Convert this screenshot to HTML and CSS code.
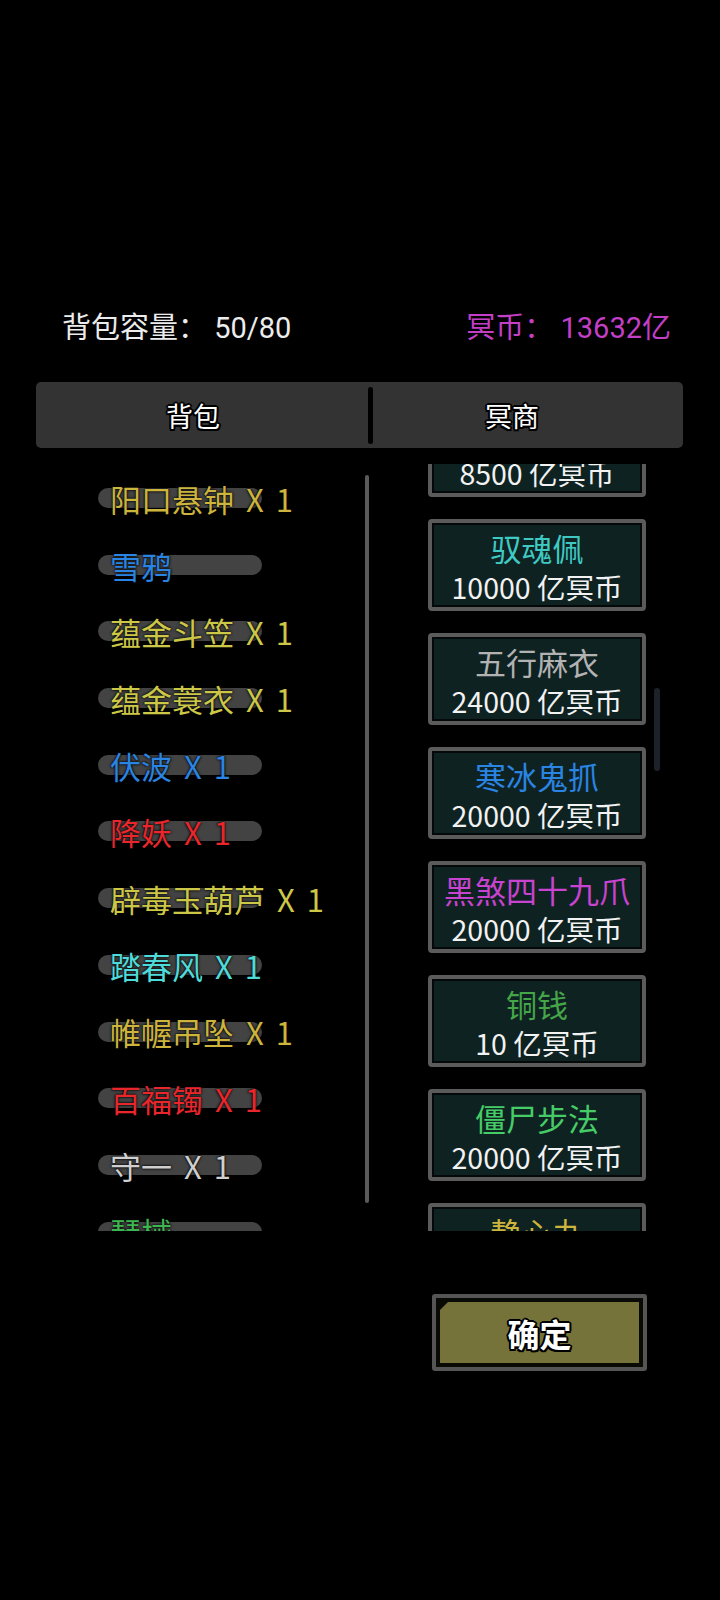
FILE: index.html
```html
<!DOCTYPE html>
<html lang="zh">
<head>
<meta charset="utf-8">
<link rel="stylesheet" href="styles.css">
</head>
<body>
<div class="screen">
  <div class="header">
    <div class="capacity">背包容量： 50/80</div>
    <div class="coins">冥币： 13632亿</div>
  </div>
  <div class="tabs">
    <div class="tab tab-left">背包</div>
    <div class="divider"></div>
    <div class="tab tab-right">冥商</div>
  </div>
  <div class="panels">
    <div class="left">
      <div class="viewport list-view">
        <div class="list">
          <div class="row"><span class="pill"></span><span class="name c-gold">阳口悬钟 X 1</span></div>
          <div class="row"><span class="pill"></span><span class="name c-blue">雪鸦</span></div>
          <div class="row"><span class="pill"></span><span class="name c-yellow">蕴金斗笠 X 1</span></div>
          <div class="row"><span class="pill"></span><span class="name c-yellow">蕴金蓑衣 X 1</span></div>
          <div class="row"><span class="pill"></span><span class="name c-blue">伏波 X 1</span></div>
          <div class="row"><span class="pill"></span><span class="name c-red">降妖 X 1</span></div>
          <div class="row"><span class="pill"></span><span class="name c-yellow">辟毒玉葫芦 X 1</span></div>
          <div class="row"><span class="pill"></span><span class="name c-cyan">踏春风 X 1</span></div>
          <div class="row"><span class="pill"></span><span class="name c-gold">帷幄吊坠 X 1</span></div>
          <div class="row"><span class="pill"></span><span class="name c-red">百福镯 X 1</span></div>
          <div class="row"><span class="pill"></span><span class="name c-gray">守一 X 1</span></div>
          <div class="row"><span class="pill"></span><span class="name c-green">琴械</span></div>
        </div>
      </div>
      <div class="scrollbar-left"></div>
    </div>
    <div class="right">
      <div class="viewport shop-view">
        <div class="shop">
          <div class="card"><div class="title c-gold">静心丸</div><div class="price">8500 亿冥币</div></div>
          <div class="card"><div class="title c-teal">驭魂佩</div><div class="price">10000 亿冥币</div></div>
          <div class="card"><div class="title c-gray2">五行麻衣</div><div class="price">24000 亿冥币</div></div>
          <div class="card"><div class="title c-blue">寒冰鬼抓</div><div class="price">20000 亿冥币</div></div>
          <div class="card"><div class="title c-magenta">黑煞四十九爪</div><div class="price">20000 亿冥币</div></div>
          <div class="card"><div class="title c-dgreen">铜钱</div><div class="price">10 亿冥币</div></div>
          <div class="card"><div class="title c-lgreen">僵尸步法</div><div class="price">20000 亿冥币</div></div>
          <div class="card"><div class="title c-gold">静心丸</div><div class="price">8500 亿冥币</div></div>
        </div>
      </div>
      <div class="scrollbar-right"></div>
    </div>
  </div>
  <div class="footer">
    <div class="confirm"><span class="notch"></span><span class="confirm-text">确定</span></div>
  </div>
</div>
</body>
</html>
```

FILE: styles.css
```css
html, body {
  margin: 0;
  padding: 0;
  background: #000;
}
body {
  font-family: "Noto Sans CJK SC", "Noto Sans", sans-serif;
  color: #eee;
}
.screen {
  width: 720px;
  height: 1600px;
  background: #000;
  overflow: hidden;
}
.header {
  display: flex;
  justify-content: space-between;
  align-items: center;
  height: 40px;
  margin-top: 305px;
  padding: 0 49px 0 62px;
  font-family: "Roboto", "Noto Sans CJK SC", sans-serif;
  font-size: 29px;
}
.capacity { color: #ececec; }
.coins { color: #c23fc6; }

.tabs {
  display: flex;
  align-items: center;
  margin: 37px 0 0 36px;
  width: 647px;
  height: 66px;
  background: #333333;
  border-radius: 5px;
}
.tab {
  text-align: center;
  font-size: 27px;
  color: #fff;
  text-shadow: -2px 0 0 #000, 2px 0 0 #000, 0 -2px 0 #000, 0 2px 0 #000,
    -1.5px -1.5px 0 #000, 1.5px 1.5px 0 #000, -1.5px 1.5px 0 #000, 1.5px -1.5px 0 #000;
}
.tab-left { width: 314px; }
.tab-right { width: 278px; }
.divider {
  width: 5px;
  height: 57px;
  margin-left: 18px;
  border-radius: 3px;
  background: #000;
}

.panels {
  display: flex;
  margin-top: 16px;
  height: 767px;
}
.left {
  display: flex;
  width: 372px;
}
.viewport {
  overflow: hidden;
  height: 767px;
}
.list-view {
  margin-left: 98px;
  width: 267px;
}
.list {
  padding-top: 1px;
}
.row {
  position: relative;
  height: 66.7px;
  display: flex;
  align-items: center;
}
.pill {
  position: absolute;
  left: 0;
  top: 23px;
  width: 164px;
  height: 20px;
  border-radius: 10px;
  background: #434343;
}
.name {
  position: relative;
  margin-left: 12px;
  font-size: 31px;
  line-height: 1;
  word-spacing: 5px;
  white-space: nowrap;
  text-shadow: 0 0 2px #000, 0 0 3px rgba(0,0,0,.9);
}
.c-gold { color: #cdb43c; }
.c-yellow { color: #cdc748; }
.c-blue { color: #2a84e2; }
.c-red { color: #e8262c; }
.c-cyan { color: #4fdada; }
.c-gray { color: #cfcfcf; }
.c-green { color: #3fb552; }
.c-teal { color: #3ecac2; }
.c-gray2 { color: #b2b2b2; }
.c-magenta { color: #c843cf; }
.c-dgreen { color: #45a549; }
.c-lgreen { color: #46cc66; }

.scrollbar-left {
  width: 4px;
  height: 728px;
  margin-top: 11px;
  border-radius: 2px;
  background: #5a5a5a;
}

.right {
  display: flex;
}
.shop-view {
  margin-left: 56px;
  width: 218px;
}
.shop {
  margin-top: -59px;
  display: flex;
  flex-direction: column;
  gap: 22px;
}
.card {
  box-sizing: border-box;
  height: 92px;
  padding-top: 6px;
  border: 4px solid #5b5b5b;
  border-radius: 4px;
  background: #0f2222;
  box-shadow: inset 0 0 0 2px #050808;
  display: flex;
  flex-direction: column;
  align-items: center;
}
.title {
  font-size: 31px;
  line-height: 38px;
  white-space: nowrap;
}
.price {
  font-size: 28.5px;
  line-height: 40px;
  color: #f2f2f2;
  white-space: nowrap;
}
.scrollbar-right {
  width: 6px;
  height: 83px;
  margin: 224px 0 0 8px;
  border-radius: 3px;
  background: #1d2129;
}

.footer {
  display: flex;
  margin-top: 63px;
  padding-left: 432px;
}
.confirm {
  position: relative;
  box-sizing: border-box;
  width: 215px;
  height: 77px;
  border: 4px solid #555;
  border-radius: 3px;
  background: #76733a;
  box-shadow: inset 0 0 0 4px #0a0a05;
  display: flex;
  align-items: center;
  justify-content: center;
}
.notch {
  position: absolute;
  left: 4px;
  top: 4px;
  width: 0;
  height: 0;
  border-top: 8px solid #0a0a05;
  border-right: 8px solid transparent;
}
.confirm-text {
  font-size: 32px;
  font-weight: 700;
  color: #fff;
  text-shadow: -2px 0 0 #000, 2px 0 0 #000, 0 -2px 0 #000, 0 2px 0 #000,
    -1.5px -1.5px 0 #000, 1.5px 1.5px 0 #000, -1.5px 1.5px 0 #000, 1.5px -1.5px 0 #000;
}
```
